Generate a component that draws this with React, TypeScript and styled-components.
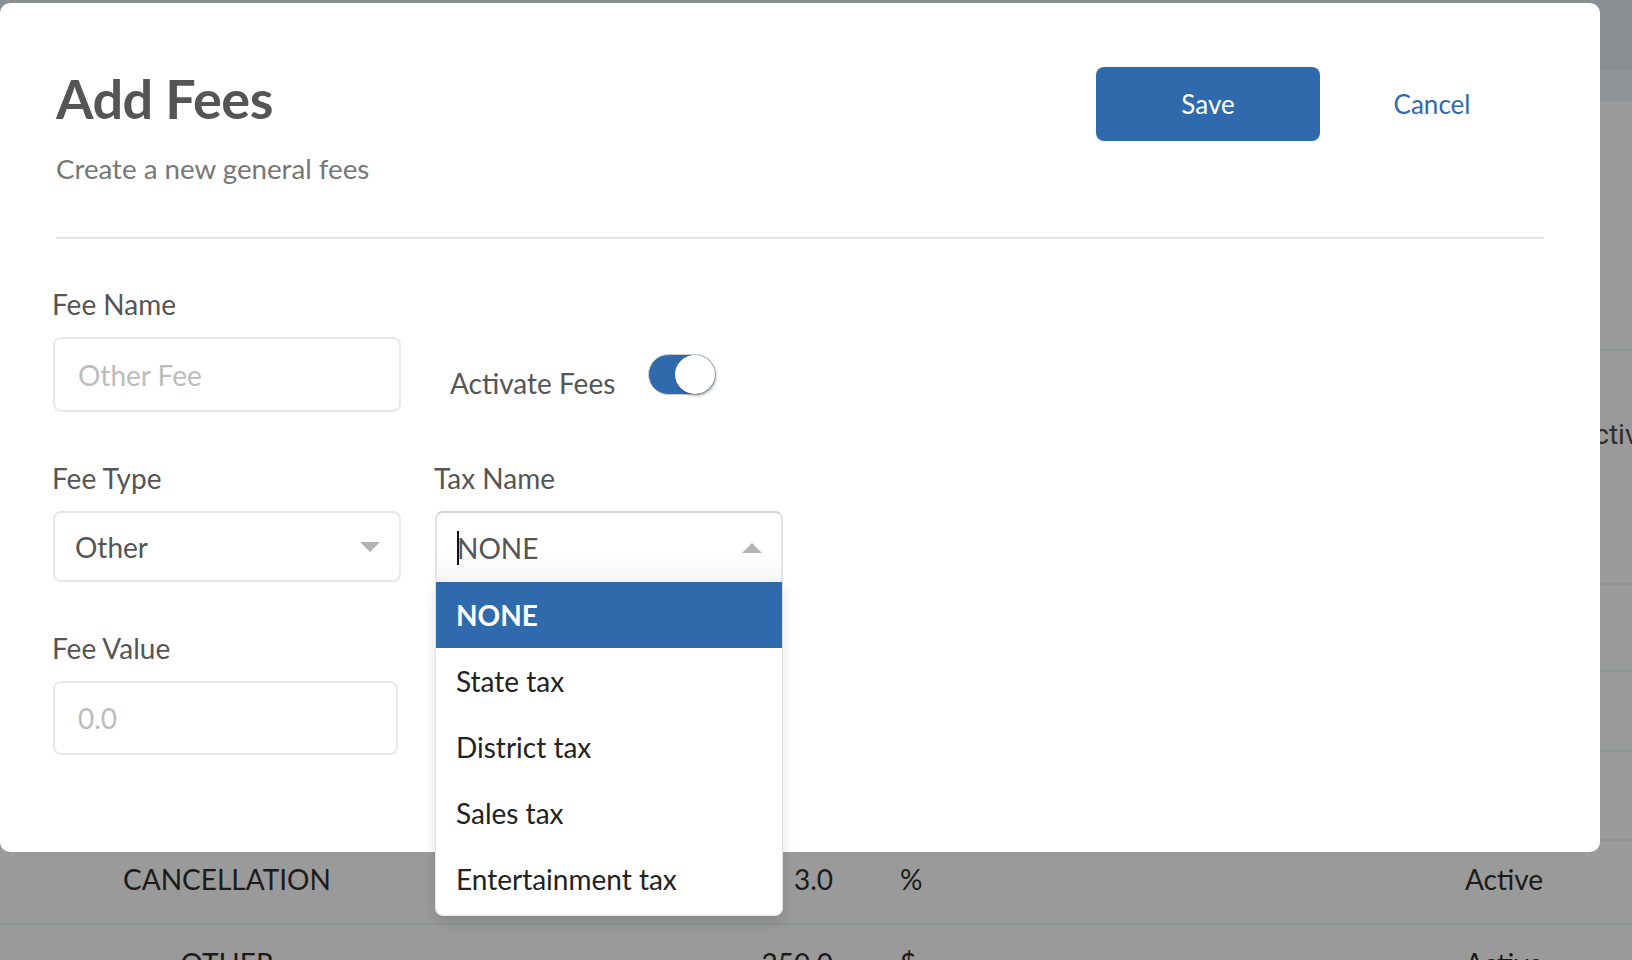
import React from "react";
import styled, { createGlobalStyle, css } from "styled-components";

const GlobalStyle = createGlobalStyle`
  html, body { margin: 0; padding: 0; }
  body { font-family: Lato, "Open Sans", Arial, sans-serif; background: #9a9a9a; }
  *, *::before, *::after { box-sizing: border-box; }
`;

const BLUE = "#2f6aad";

/* ---------- page behind the dialog ---------- */
const Screen = styled.div`
  position: relative;
  width: 1632px;
  height: 960px;
  overflow: hidden;
  background: #9a9a9a;
`;

const Behind = styled.div`
  display: flex;
  flex-direction: column;
`;

const TopBar = styled.div`
  height: 70px;
  background: #8a8f93;
`;

const TableHead = styled.div`
  height: 31px;
  background: #8f9497;
`;

const Row = styled.div<{ $h: number; $pad: number }>`
  height: ${(p) => p.$h}px;
  padding-top: ${(p) => p.$pad}px;
  border-bottom: 2px solid #8f9497;
  display: grid;
  grid-template-columns: 454px 379px 632px 111px 1fr;
  font-size: 28px;
  line-height: 34px;
  color: #1b1b1b;
`;

const NameCell = styled.div`
  text-align: center;
`;

const ValueCell = styled.div`
  text-align: right;
`;

const UnitCell = styled.div`
  padding-left: 67px;
`;

const StatusCell = styled.div`
  white-space: nowrap;
`;

const SideCell = styled.div`
  font-family: Roboto, Arial, sans-serif;
  font-size: 28px;
  color: #2e2e2e;
  white-space: nowrap;
`;

/* ---------- dialog ---------- */
const Modal = styled.div`
  position: absolute;
  left: 0;
  top: 3px;
  width: 1600px;
  height: 849px;
  background: #fff;
  border-radius: 10px;
`;

const Header = styled.div`
  display: flex;
  justify-content: space-between;
  align-items: flex-start;
  padding: 64px 56px 0 56px;
`;

const TitleBlock = styled.div`
  display: flex;
  flex-direction: column;
`;

const Title = styled.h1`
  margin: 0;
  font-size: 54px;
  line-height: 64px;
  font-weight: 700;
  color: #555;
  letter-spacing: -0.5px;
`;

const Subtitle = styled.p`
  margin: 21px 0 0 0;
  font-size: 27.7px;
  line-height: 34px;
  color: #777;
`;

const Actions = styled.div`
  display: flex;
`;

const ActionButton = styled.button<{ $primary?: boolean }>`
  width: 224px;
  height: 74px;
  border: none;
  border-radius: 8px;
  font-family: Lato, sans-serif;
  font-size: 26px;
  cursor: pointer;
  ${(p) =>
    p.$primary
      ? css`
          background: ${BLUE};
          color: #fff;
        `
      : css`
          background: transparent;
          color: ${BLUE};
        `}
`;

const Divider = styled.div`
  margin: 51px 56px 0 56px;
  height: 2px;
  background: #e4e4e4;
`;

const Form = styled.div`
  display: grid;
  grid-template-columns: 348px 348px;
  column-gap: 34px;
  row-gap: 51px;
  padding: 50px 0 0 53px;
`;

const Field = styled.div`
  display: flex;
  flex-direction: column;
`;

const Label = styled.label`
  font-size: 28px;
  line-height: 32px;
  color: #555;
  margin: -1px 0 17px -1px;
`;

const TextInput = styled.input<{ $w?: number; $h?: number }>`
  width: ${(p) => p.$w ?? 348}px;
  height: ${(p) => p.$h ?? 75}px;
  border: 2px solid #e8e8e8;
  border-radius: 8px;
  padding: 0 0 0 23px;
  font-family: Lato, sans-serif;
  font-size: 28px;
  color: #555;
  outline: none;
  background: #fff;
  &::placeholder {
    color: #bcbcbc;
  }
`;

const ActivateGroup = styled.div`
  align-self: end;
  height: 75px;
  display: flex;
  align-items: center;
  padding-left: 15px;
`;

const ActivateText = styled.span`
  font-size: 28px;
  line-height: 32px;
  color: #555;
  margin-top: 17px;
`;

const Toggle = styled.div<{ $on: boolean }>`
  position: relative;
  margin-left: 33px;
  width: 68px;
  height: 41px;
  border-radius: 21px;
  border: 1px solid #c9ccd0;
  background: ${(p) => (p.$on ? BLUE : "#ddd")};
`;

const Knob = styled.div`
  position: absolute;
  right: 0;
  top: 0;
  width: 40px;
  height: 39px;
  border-radius: 50%;
  background: #fff;
  box-shadow: 1px 2px 3px rgba(0, 0, 0, 0.3);
`;

const SelectBox = styled.div<{ $open?: boolean }>`
  position: relative;
  width: 348px;
  height: 71px;
  border: 2px solid #e8e8e8;
  border-radius: 8px;
  display: flex;
  align-items: center;
  justify-content: space-between;
  padding: 0 19px 0 20px;
  font-size: 28px;
  color: #555;
  background: #fff;
  ${(p) =>
    p.$open &&
    css`
      border-color: #e3e3e3;
      border-top-color: #d2d2d2;
      border-bottom: none;
      border-radius: 8px 8px 0 0;
      background: linear-gradient(#ffffff 55%, #f6f6f6);
    `}
`;

const ValueText = styled.span`
  display: inline-flex;
  align-items: center;
`;

const Caret = styled.span`
  display: inline-block;
  width: 2px;
  height: 34px;
  background: #111;
  margin-right: -2px;
`;

const Menu = styled.div`
  position: absolute;
  top: 100%;
  left: -2px;
  right: -2px;
  background: #fff;
  border: 1px solid #e3e3e3;
  border-top: none;
  border-radius: 0 0 8px 8px;
  padding-bottom: 3px;
  box-shadow: 0 6px 14px rgba(0, 0, 0, 0.12);
  z-index: 2;
`;

const MenuItem = styled.div<{ $active?: boolean }>`
  height: 66px;
  display: flex;
  align-items: center;
  padding-left: 20px;
  font-size: 28px;
  color: #222;
  ${(p) =>
    p.$active &&
    css`
      background: ${BLUE};
      color: #fff;
      font-weight: 700;
    `}
`;

const Arrow = ({ up }: { up?: boolean }) => (
  <svg width="20" height="10" viewBox="0 0 20 10">
    <polygon points={up ? "0,10 20,10 10,0" : "0,0 20,0 10,10"} fill="#b3b3b3" />
  </svg>
);

const rows = [
  { h: 250, pad: 0 },
  { h: 234, pad: 67, side: "Active" },
  { h: 87, pad: 0 },
  { h: 80, pad: 0 },
  { h: 89, pad: 0 },
  { h: 84, pad: 21, name: "CANCELLATION", value: "3.0", unit: "%", status: "Active" },
  { h: 90, pad: 21, name: "OTHER", value: "250.0", unit: "$", status: "Active" },
];

const taxes = ["NONE", "State tax", "District tax", "Sales tax", "Entertainment tax"];

export default function App() {
  return (
    <Screen>
      <GlobalStyle />
      <Behind>
        <TopBar />
        <TableHead />
        {rows.map((r, i) => (
          <Row key={i} $h={r.h} $pad={r.pad}>
            <NameCell>{r.name}</NameCell>
            <ValueCell>{r.value}</ValueCell>
            <UnitCell>{r.unit}</UnitCell>
            <StatusCell>{r.status}</StatusCell>
            <SideCell>{r.side}</SideCell>
          </Row>
        ))}
      </Behind>

      <Modal>
        <Header>
          <TitleBlock>
            <Title>Add Fees</Title>
            <Subtitle>Create a new general fees</Subtitle>
          </TitleBlock>
          <Actions>
            <ActionButton $primary>Save</ActionButton>
            <ActionButton>Cancel</ActionButton>
          </Actions>
        </Header>
        <Divider />
        <Form>
          <Field>
            <Label>Fee Name</Label>
            <TextInput placeholder="Other Fee" />
          </Field>
          <ActivateGroup>
            <ActivateText>Activate Fees</ActivateText>
            <Toggle $on>
              <Knob />
            </Toggle>
          </ActivateGroup>

          <Field>
            <Label>Fee Type</Label>
            <SelectBox>
              <ValueText>Other</ValueText>
              <Arrow />
            </SelectBox>
          </Field>
          <Field>
            <Label>Tax Name</Label>
            <SelectBox $open>
              <ValueText>
                <Caret />
                NONE
              </ValueText>
              <Arrow up />
              <Menu>
                {taxes.map((t, i) => (
                  <MenuItem key={t} $active={i === 0}>
                    {t}
                  </MenuItem>
                ))}
              </Menu>
            </SelectBox>
          </Field>

          <Field>
            <Label>Fee Value</Label>
            <TextInput placeholder="0.0" $w={345} $h={74} />
          </Field>
        </Form>
      </Modal>
    </Screen>
  );
}
